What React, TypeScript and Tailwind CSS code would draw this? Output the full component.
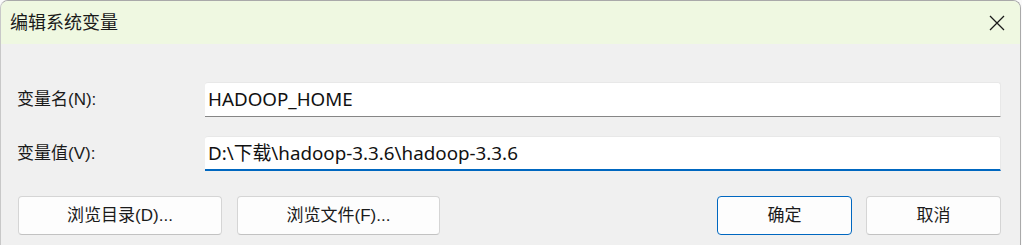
import React from "react";

const font = { fontFamily: '"Liberation Sans", "Noto Sans CJK SC", sans-serif' };
const inputFont = { fontFamily: '"Noto Sans", "Noto Sans CJK SC", sans-serif' };

function Btn({ children, primary, w }: { children: React.ReactNode; primary?: boolean; w: string }) {
  return (
    <button
      className={
        "h-[39px] rounded-[4px] bg-[#fdfdfd] text-[17px] text-[#1b1b1b] flex items-center justify-center " +
        w +
        (primary
          ? " border border-[#0067c0]"
          : " border border-[#d5d5d5] border-b-[#c2c2c2]")
      }
    >
      {children}
    </button>
  );
}

export default function App() {
  return (
    <div className="w-[1022px] h-[245px] bg-[#fafafa] overflow-hidden" style={font}>
      <div className="w-[1021px] h-[245px] rounded-t-[8px] border-t border-r border-l border-[#a9a9a9] border-l-[#c8c8c8] overflow-hidden flex flex-col bg-[#f0f0f0]">
        <div className="h-[43px] bg-[#eff8e1] flex items-center justify-between pl-[9px] pr-[15px] shrink-0">
          <span className="text-[18px] text-[#1a1a1a] leading-none">编辑系统变量</span>
          <svg width="16" height="16" viewBox="0 0 16 16">
            <path d="M1 1 L15 15 M15 1 L1 15" stroke="#1a1a1a" strokeWidth="1.3" fill="none" />
          </svg>
        </div>
        <div className="flex-1 flex flex-col pl-[16px] pr-[19px] pt-[38px]">
          <div className="flex items-center h-[35px]">
            <span className="w-[188px] text-[17px] text-[#1a1a1a]">变量名(N):</span>
            <div
              className="flex-1 h-[35px] bg-white border-t border-r border-[#e8e8e8] border-b border-b-[#868686] rounded-t-[3px] flex items-center pl-[3px] text-[18.8px] text-[#111]"
              style={inputFont}
            >
              HADOOP_HOME
            </div>
          </div>
          <div className="flex items-center h-[35px] mt-[19px]">
            <span className="w-[188px] text-[17px] text-[#1a1a1a]">变量值(V):</span>
            <div
              className="flex-1 h-[35px] bg-white border-t border-r border-[#e8e8e8] border-b-2 border-b-[#0067c0] rounded-t-[3px] flex items-center pl-[3px] text-[18.8px] text-[#111]"
              style={inputFont}
            >
              D:\下载\hadoop-3.3.6\hadoop-3.3.6
            </div>
          </div>
          <div className="flex items-center mt-[25px]">
            <div className="flex gap-[15px] ml-[1px]">
              <Btn w="w-[204px]">浏览目录(D)...</Btn>
              <Btn w="w-[203px]">浏览文件(F)...</Btn>
            </div>
            <div className="flex gap-[14px] ml-auto">
              <Btn w="w-[135px]" primary>确定</Btn>
              <Btn w="w-[135px]">取消</Btn>
            </div>
          </div>
        </div>
      </div>
    </div>
  );
}
